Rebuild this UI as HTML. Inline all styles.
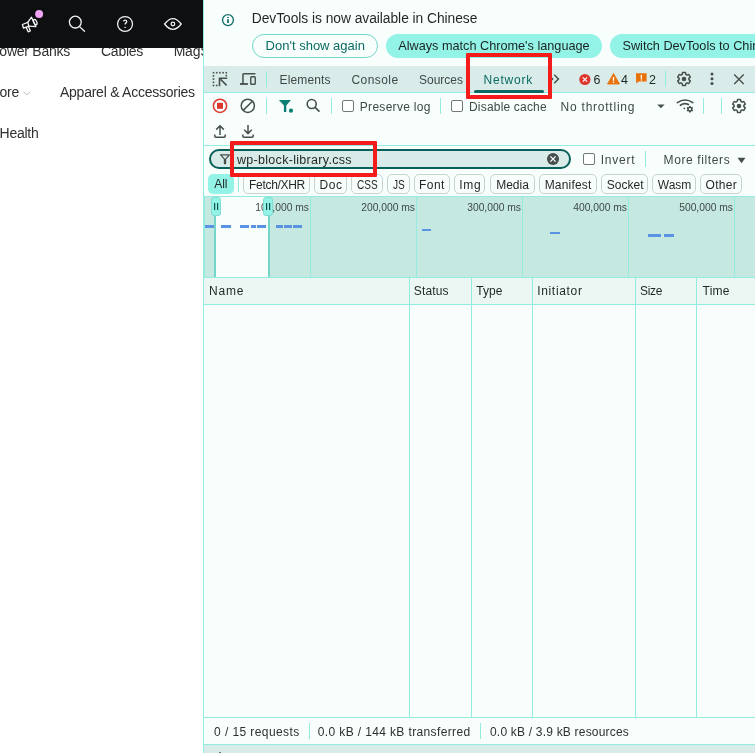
<!DOCTYPE html>
<html><head><meta charset="utf-8">
<style>
*{margin:0;padding:0;box-sizing:border-box}
html,body{width:755px;height:753px;overflow:hidden;background:#fff;font-family:"Liberation Sans",sans-serif}
.a{position:absolute}
.t{position:absolute;white-space:nowrap;line-height:1}
#page{will-change:transform;position:absolute;left:0;top:0;width:203px;height:753px;background:#fff;overflow:hidden}
#bar{position:absolute;left:0;top:0;width:203px;height:48px;background:#0e0f11}
.nav{position:absolute;white-space:nowrap;line-height:1;font-size:14px;letter-spacing:-0.25px;color:#303030}
#dt{will-change:transform;position:absolute;left:203px;top:0;width:552px;height:753px;background:#f8fefc;overflow:hidden;color:#1f1f1f}
.d{position:absolute;white-space:nowrap;line-height:1;font-size:12px;color:#3f4948}
.hl{position:absolute;height:1px;background:#94ece0}
.vl{position:absolute;width:1px;background:#94ece0}
.btn{position:absolute;top:34px;height:24px;border-radius:12px}
.chip{position:absolute;top:174px;height:20px;border:1px solid #c8d3d1;border-radius:5px}
.chip span{position:absolute;top:3.5px;white-space:nowrap;line-height:1;font-size:12px;color:#1f2625}
.cb{position:absolute;width:12px;height:12px;border:1px solid #6f7978;border-radius:2px;background:#fff}
.lab{position:absolute;white-space:nowrap;line-height:1;font-size:10.3px;color:#3f4948;text-align:right}
.dash{position:absolute;height:2.3px;background:#5b93e4}
svg{position:absolute;overflow:visible}
</style></head><body>
<div id="page">
  <div class="nav" style="right:133px;top:43.6px">Power Banks</div>
  <div class="nav" style="left:101px;top:43.6px">Cables</div>
  <div class="nav" style="left:173.7px;top:43.6px">MagSafe</div>
  <div id="bar">
    <svg style="left:0;top:0" width="203" height="48" viewBox="0 0 203 48">
      <g fill="none" stroke="#f2f2f2" stroke-width="1.3" stroke-linejoin="round" stroke-linecap="round">
        <path d="M22.4 24.5 L27.8 22.4 L28.9 26.2 L23.5 28.2 Z"/>
        <path d="M27.8 22.4 L31.5 17.2 L35.9 26.6 L28.9 26.2"/>
        <ellipse cx="35.2" cy="22.1" rx="1.5" ry="2.8" transform="rotate(-25 35.2 22.1)"/>
        <path d="M26.1 27.4 L28.2 31.8 L30.3 30.9 L28.5 26.6"/>
        <circle cx="75.3" cy="22.1" r="5.9"/>
        <path d="M79.6 26.6 L84.5 31.3"/>
        <circle cx="125.05" cy="23.95" r="7.45" stroke-width="1.25"/>
        <path d="M123.5 21.3 Q123.7 20.2 125.1 20.2 Q126.7 20.2 126.7 21.6 Q126.7 22.5 125.8 23.1 Q125.1 23.6 125.1 24.6" stroke-width="1.3" stroke-linecap="butt"/>
        <path d="M164.6 24 Q172.9 13.2 181.2 24 Q172.9 34.8 164.6 24 Z"/>
        <circle cx="172.9" cy="24" r="1.8"/>
      </g>
      <rect x="124.3" y="26.9" width="1.6" height="1" fill="#f2f2f2"/>
      <circle cx="39.1" cy="14" r="4" fill="#f0a5f4"/>
    </svg>
  </div>
  <div class="nav" style="right:184px;top:84.8px">More</div>
  <svg style="left:23px;top:90.5px" width="8" height="5" viewBox="0 0 8 5"><path d="M0.5 0.5 L3.75 4 L7 0.5" fill="none" stroke="#b5b5b5" stroke-width="0.9"/></svg>
  <div class="nav" style="left:60px;top:84.8px">Apparel &amp; Accessories</div>
  <div class="nav" style="right:164.5px;top:126.2px">Health</div>
</div>

<div id="dt">
  <div class="vl" style="left:0;top:0;height:753px"></div>
  <!-- infobar -->
  <svg style="left:17px;top:12px" width="16" height="16" viewBox="0 0 16 16">
    <circle cx="7.96" cy="8.1" r="5.45" fill="none" stroke="#14706a" stroke-width="1.35"/>
    <rect x="7.05" y="7.2" width="1.8" height="3.8" fill="#14706a"/>
    <rect x="7.05" y="4.95" width="1.8" height="1" fill="#14706a"/>
  </svg>
  <div class="d" style="left:48.8px;top:12px;font-size:13.8px;letter-spacing:-0.04px;color:#1f2625">DevTools is now available in Chinese</div>
  <div class="btn" style="left:49px;width:126px;border:1px solid #72d6c8"></div>
  <div class="d" style="left:62.6px;top:38.8px;font-size:13px;color:#0b6b63">Don't show again</div>
  <div class="btn" style="left:183px;width:216px;background:#93f3e6"></div>
  <div class="d" style="left:195.2px;top:39.6px;font-size:12.7px;color:#1b2423">Always match Chrome's language</div>
  <div class="btn" style="left:407px;width:200px;background:#93f3e6"></div>
  <div class="d" style="left:419.5px;top:39.6px;font-size:12.7px;color:#1b2423">Switch DevTools to Chinese</div>

  <!-- toolbar -->
  <div class="a" style="left:1px;top:66px;width:551px;height:26px;background:#d9ece9"></div>
  <div class="hl" style="left:1px;top:92px;width:551px"></div>
  <svg style="left:9px;top:71px" width="16" height="16" viewBox="0 0 16 16">
    <g fill="#474f4e"><rect x="0.7" y="0.9" width="1.6" height="1.6"/><rect x="3.9" y="0.9" width="1.6" height="1.6"/><rect x="7.1" y="0.9" width="1.6" height="1.6"/><rect x="10.3" y="0.9" width="1.6" height="1.6"/><rect x="13.5" y="0.9" width="1.6" height="1.6"/><rect x="13.5" y="3.8" width="1.6" height="1.6"/><rect x="0.7" y="4.1" width="1.6" height="1.6"/><rect x="0.7" y="7.3" width="1.6" height="1.6"/><rect x="0.7" y="10.5" width="1.6" height="1.6"/><rect x="0.7" y="13.7" width="1.6" height="1.6"/><rect x="3.9" y="13.7" width="1.6" height="1.6"/></g>
    <path d="M7.5 15.2 V7.3 H15.2 M7.5 7.3 L14.6 14.4" fill="none" stroke="#474f4e" stroke-width="1.6"/>
  </svg>
  <svg style="left:36px;top:72px" width="18" height="14" viewBox="0 0 18 14">
    <path d="M15.9 1.75 H4.9 Q3.95 1.75 3.95 2.7 V11.5" fill="none" stroke="#474f4e" stroke-width="1.5" stroke-linecap="round"/>
    <rect x="1" y="11.1" width="7.9" height="1.8" fill="#474f4e"/>
    <rect x="11.75" y="4.75" width="4.5" height="7.5" rx="0.8" fill="none" stroke="#474f4e" stroke-width="1.4"/>
  </svg>
  <div class="vl" style="left:63px;top:71px;height:16px"></div>
  <div class="d" style="left:76.5px;top:74.4px;letter-spacing:0.15px">Elements</div>
  <div class="d" style="left:148.5px;top:74.4px;letter-spacing:0.43px">Console</div>
  <div class="d" style="left:216px;top:74.4px">Sources</div>
  <div class="d" style="left:280.50px;top:74.4px;letter-spacing:0.80px;color:#0b6b63">Network</div>
  <div class="a" style="left:271px;top:89.5px;width:70px;height:3px;border-radius:2px;background:#0b6b63"></div>
  <svg style="left:342px;top:73px" width="16" height="12" viewBox="0 0 16 12">
    <path d="M3.5 1.8 L7.6 6 L3.5 10.2 M9.2 1.8 L13.4 6 L9.2 10.2" fill="none" stroke="#474f4e" stroke-width="1.5"/>
  </svg>
  <svg style="left:376px;top:73px" width="12" height="12" viewBox="0 0 12 12">
    <circle cx="5.9" cy="6.5" r="5.6" fill="#dc362e"/>
    <path d="M3.7 4.3 L8.1 8.7 M8.1 4.3 L3.7 8.7" stroke="#fff" stroke-width="1.1"/>
  </svg>
  <div class="d" style="left:390.5px;top:74px;font-size:12.5px;color:#1f2625">6</div>
  <svg style="left:404px;top:73px" width="13" height="12" viewBox="0 0 13 12">
    <path d="M6.5 0.5 L12.5 11 H0.5 Z" fill="#e8710a" stroke="#e8710a" stroke-linejoin="round" stroke-width="0.8"/>
    <rect x="5.8" y="4" width="1.4" height="3.8" fill="#fff"/><rect x="5.8" y="8.6" width="1.4" height="1.3" fill="#fff"/>
  </svg>
  <div class="d" style="left:418px;top:74px;font-size:12.5px;color:#1f2625">4</div>
  <svg style="left:429px;top:73px" width="16" height="12" viewBox="0 0 16 12">
    <path d="M4 0.3 H14.6 V8.6 H6.8 L4.2 10.6 Z" fill="#e8710a"/>
    <rect x="8.7" y="1.9" width="1.3" height="3.8" fill="#fff"/><rect x="8.7" y="6.4" width="1.3" height="1.2" fill="#fff"/>
  </svg>
  <div class="d" style="left:446px;top:74px;font-size:12.5px;color:#1f2625">2</div>
  <div class="vl" style="left:462px;top:71px;height:16px"></div>
  <svg style="left:473px;top:70.6px" width="16" height="16" viewBox="0 0 16 16">
    <path d="M6.16 3.46 L6.52 1.57 L9.48 1.57 L9.84 3.46 L11.02 4.14 L12.83 3.50 L14.31 6.07 L12.85 7.32 L12.85 8.68 L14.31 9.93 L12.83 12.50 L11.02 11.86 L9.84 12.54 L9.48 14.43 L6.52 14.43 L6.16 12.54 L4.98 11.86 L3.17 12.50 L1.69 9.93 L3.15 8.68 L3.15 7.32 L1.69 6.07 L3.17 3.50 L4.98 4.14 Z" fill="none" stroke="#474f4e" stroke-width="1.5" stroke-linejoin="round"/>
    <circle cx="8" cy="8" r="2.3" fill="#474f4e"/>
  </svg>
  <svg style="left:506px;top:72px" width="6" height="14" viewBox="0 0 6 14">
    <circle cx="3" cy="1.9" r="1.5" fill="#474f4e"/><circle cx="3" cy="6.8" r="1.5" fill="#474f4e"/><circle cx="3" cy="11.6" r="1.5" fill="#474f4e"/>
  </svg>
  <svg style="left:530px;top:74px" width="12" height="11" viewBox="0 0 12 11">
    <path d="M1.2 0.6 L10.7 10.1 M10.7 0.6 L1.2 10.1" fill="none" stroke="#474f4e" stroke-width="1.4"/>
  </svg>

  <!-- row 2 -->
  <svg style="left:9px;top:98px" width="16" height="16" viewBox="0 0 16 16">
    <circle cx="8" cy="7.8" r="6.6" fill="none" stroke="#dc362e" stroke-width="1.5"/>
    <rect x="5" y="4.8" width="6" height="6" fill="#dc362e"/>
  </svg>
  <svg style="left:37px;top:98px" width="16" height="16" viewBox="0 0 16 16">
    <circle cx="7.8" cy="7.8" r="6.6" fill="none" stroke="#474f4e" stroke-width="1.5"/>
    <path d="M3.2 12.4 L12.4 3.2" stroke="#474f4e" stroke-width="1.5"/>
  </svg>
  <div class="vl" style="left:63px;top:98px;height:16px"></div>
  <svg style="left:75px;top:99px" width="16" height="14" viewBox="0 0 16 14">
    <path d="M0.9 1 H13 L8.3 6.6 V12.9 H5.9 V6.6 Z" fill="#0b7f74"/>
    <circle cx="13" cy="11.7" r="2.1" fill="#0b7f74"/>
  </svg>
  <svg style="left:102px;top:98.3px" width="16" height="15" viewBox="0 0 16 15">
    <circle cx="6.7" cy="6" r="4.5" fill="none" stroke="#474f4e" stroke-width="1.6"/>
    <path d="M9.8 9.2 L14.5 13.6" stroke="#474f4e" stroke-width="1.7"/>
  </svg>
  <div class="vl" style="left:128px;top:98px;height:16px"></div>
  <div class="cb" style="left:138.7px;top:100.3px"></div>
  <div class="d" style="left:156.80px;top:100.6px;letter-spacing:0.29px">Preserve log</div>
  <div class="vl" style="left:237px;top:98px;height:16px"></div>
  <div class="cb" style="left:247.9px;top:100.3px"></div>
  <div class="d" style="left:266.00px;top:100.6px;letter-spacing:0.19px">Disable cache</div>
  <div class="d" style="left:357.60px;top:100.6px;letter-spacing:0.76px">No throttling</div>
  <svg style="left:454px;top:104px" width="8" height="5" viewBox="0 0 8 5"><path d="M0.2 0.4 H7.6 L3.9 4.2 Z" fill="#474f4e"/></svg>
  <svg style="left:473px;top:97px" width="20" height="16" viewBox="0 0 20 16">
    <path d="M1.4 5.6 Q9.1 0.4 16.8 5.6" fill="none" stroke="#474f4e" stroke-width="1.7" stroke-linecap="round"/>
    <path d="M4.4 8.3 Q8.4 5.4 12.4 7.6" fill="none" stroke="#474f4e" stroke-width="1.7" stroke-linecap="round"/>
    <path d="M9 10.2 L7 11.4 L9 12.6 Z" fill="#474f4e"/>
    <path d="M12.88 9.92 L13.08 8.90 L14.72 8.90 L14.92 9.92 L15.37 10.18 L16.35 9.84 L17.17 11.26 L16.39 11.94 L16.39 12.46 L17.17 13.14 L16.35 14.56 L15.37 14.22 L14.92 14.48 L14.72 15.50 L13.08 15.50 L12.88 14.48 L12.43 14.22 L11.45 14.56 L10.63 13.14 L11.41 12.46 L11.41 11.94 L10.63 11.26 L11.45 9.84 L12.43 10.18 Z M15.00 12.2 A1.1 1.1 0 1 0 12.80 12.2 A1.1 1.1 0 1 0 15.00 12.2 Z" fill="#474f4e" fill-rule="evenodd"/>
  </svg>
  <div class="vl" style="left:500px;top:98px;height:16px"></div>
  <div class="vl" style="left:518px;top:98px;height:16px"></div>
  <svg style="left:528px;top:97.9px" width="16" height="16" viewBox="0 0 16 16">
    <path d="M6.16 3.46 L6.52 1.57 L9.48 1.57 L9.84 3.46 L11.02 4.14 L12.83 3.50 L14.31 6.07 L12.85 7.32 L12.85 8.68 L14.31 9.93 L12.83 12.50 L11.02 11.86 L9.84 12.54 L9.48 14.43 L6.52 14.43 L6.16 12.54 L4.98 11.86 L3.17 12.50 L1.69 9.93 L3.15 8.68 L3.15 7.32 L1.69 6.07 L3.17 3.50 L4.98 4.14 Z" fill="none" stroke="#474f4e" stroke-width="1.5" stroke-linejoin="round"/>
    <circle cx="8" cy="8" r="2.3" fill="#474f4e"/>
  </svg>

  <!-- row 3 -->
  <svg style="left:10px;top:124px" width="14" height="15" viewBox="0 0 14 15">
    <path d="M7 11 V2 M3.2 5.6 L7 1.8 L10.8 5.6" fill="none" stroke="#474f4e" stroke-width="1.5"/>
    <path d="M1.8 10.6 V12 Q1.8 13.2 3 13.2 H11 Q12.2 13.2 12.2 12 V10.6" fill="none" stroke="#474f4e" stroke-width="1.5"/>
  </svg>
  <svg style="left:38px;top:124px" width="14" height="15" viewBox="0 0 14 15">
    <path d="M7 1 V9.5 M3.2 5.8 L7 9.6 L10.8 5.8" fill="none" stroke="#474f4e" stroke-width="1.5"/>
    <path d="M1.8 10.6 V12 Q1.8 13.2 3 13.2 H11 Q12.2 13.2 12.2 12 V10.6" fill="none" stroke="#474f4e" stroke-width="1.5"/>
  </svg>
  <div class="hl" style="left:1px;top:145px;width:551px"></div>

  <!-- filter input -->
  <div class="a" style="left:6px;top:149px;width:362px;height:20px;border:2px solid #08605a;border-radius:10px;background:#d9ebe8"></div>
  <svg style="left:17px;top:154px" width="10" height="10" viewBox="0 0 10 10">
    <path d="M0.6 0.8 H9.4 L5.6 5.2 V9.6 H4.4 V5.2 Z" fill="none" stroke="#474f4e" stroke-width="1.2" stroke-linejoin="round"/>
  </svg>
  <div class="d" style="left:34px;top:154px;font-size:12.5px;letter-spacing:0.3px;color:#1f2625">wp-block-library.css</div>
  <svg style="left:344px;top:153px" width="12" height="12" viewBox="0 0 12 12">
    <circle cx="6" cy="6" r="6" fill="#474f4e"/>
    <path d="M3.4 3.4 L8.6 8.6 M8.6 3.4 L3.4 8.6" stroke="#fff" stroke-width="1.3"/>
  </svg>
  <div class="cb" style="left:380px;top:153px"></div>
  <div class="d" style="left:397.8px;top:154px;letter-spacing:0.74px">Invert</div>
  <div class="vl" style="left:442px;top:151px;height:16px"></div>
  <div class="d" style="left:460.60px;top:154px;letter-spacing:0.61px">More filters</div>
  <svg style="left:533.5px;top:157px" width="9" height="7" viewBox="0 0 9 7"><path d="M0.5 0.8 H8.5 L4.5 6.2 Z" fill="#474f4e"/></svg>

  <!-- chips -->
  <div class="a" style="left:5px;top:174px;width:26px;height:20px;border-radius:5px;background:#93f3e6"></div>
  <div class="d" style="left:11.2px;top:177.6px;color:#1f2625">All</div>
  <div class="vl" style="left:35px;top:177px;height:15px"></div>
  <div class="chip" style="left:40px;width:67px"><span style="left:5.00px;letter-spacing:-0.3px">Fetch/XHR</span></div>
  <div class="chip" style="left:111px;width:33px"><span style="left:4.4px;letter-spacing:0.6px">Doc</span></div>
  <div class="chip" style="left:148px;width:32px"><span style="left:4.6px;transform:scaleX(0.84);transform-origin:0 0">CSS</span></div>
  <div class="chip" style="left:184px;width:23px"><span style="left:5.2px;transform:scaleX(0.84);transform-origin:0 0">JS</span></div>
  <div class="chip" style="left:211px;width:36px"><span style="left:4.1px;letter-spacing:0.4px">Font</span></div>
  <div class="chip" style="left:251px;width:31px"><span style="left:4.3px;letter-spacing:0.7px">Img</span></div>
  <div class="chip" style="left:287px;width:45px"><span style="left:5.20px">Media</span></div>
  <div class="chip" style="left:336px;width:58px"><span style="left:4.7px;letter-spacing:0.17px">Manifest</span></div>
  <div class="chip" style="left:398px;width:47px"><span style="left:4.80px">Socket</span></div>
  <div class="chip" style="left:449px;width:44px"><span style="left:4.80px">Wasm</span></div>
  <div class="chip" style="left:497px;width:42px"><span style="left:4.5px;letter-spacing:0.3px">Other</span></div>

  <!-- overview -->
  <div class="hl" style="left:1px;top:196px;width:551px"></div>
  <div class="a" style="left:1px;top:197px;width:551px;height:80px;background:#c5e8e1"></div>
  <div class="a" style="left:13px;top:197px;width:53px;height:80px;background:#f8fefc"></div>
  <div class="vl" style="left:107px;top:197px;height:80px"></div>
  <div class="vl" style="left:213px;top:197px;height:80px"></div>
  <div class="vl" style="left:319px;top:197px;height:80px"></div>
  <div class="vl" style="left:425px;top:197px;height:80px"></div>
  <div class="vl" style="left:531px;top:197px;height:80px"></div>
  <div class="lab" style="right:446px;top:203px">100,000 ms</div>
  <div class="lab" style="right:340px;top:203px">200,000 ms</div>
  <div class="lab" style="right:234px;top:203px">300,000 ms</div>
  <div class="lab" style="right:128px;top:203px">400,000 ms</div>
  <div class="lab" style="right:22px;top:203px">500,000 ms</div>
    <div class="dash" style="left:1.7px;width:9.4px;top:225.4px"></div>
  <div class="dash" style="left:17.9px;width:10.1px;top:225.4px"></div>
  <div class="dash" style="left:36.8px;width:9.5px;top:225.4px"></div>
  <div class="dash" style="left:47.6px;width:5.4px;top:225.4px"></div>
  <div class="dash" style="left:53.7px;width:9.5px;top:225.4px"></div>
  <div class="dash" style="left:72.6px;width:7.4px;top:225.4px"></div>
  <div class="dash" style="left:80.7px;width:8.1px;top:225.4px"></div>
  <div class="dash" style="left:89.8px;width:9.2px;top:225.4px"></div>
  <div class="dash" style="left:218.9px;width:9.0px;top:228.6px"></div>
  <div class="dash" style="left:346.9px;width:10.0px;top:232px"></div>
  <div class="dash" style="left:445.4px;width:12.9px;top:234.4px"></div>
  <div class="dash" style="left:461.3px;width:9.9px;top:234.4px"></div>
  <div class="a" style="left:11px;top:197px;width:2px;height:80px;background:#73d6c9"></div>
  <div class="a" style="left:65px;top:197px;width:2px;height:80px;background:#73d6c9"></div>
  <div class="a" style="left:8px;top:197px;width:10px;height:19px;border-radius:3px;background:#93f3e6;border:1px solid #7fdcd0"></div>
  <div class="a" style="left:60px;top:197px;width:10px;height:19px;border-radius:3px;background:#93f3e6;border:1px solid #7fdcd0"></div>
  <svg style="left:8px;top:197px" width="10" height="19" viewBox="0 0 10 19"><path d="M3.6 6 V13 M6.6 6 V13" stroke="#08514b" stroke-width="1.2"/></svg>
  <svg style="left:60px;top:197px" width="10" height="19" viewBox="0 0 10 19"><path d="M3.6 6 V13 M6.6 6 V13" stroke="#08514b" stroke-width="1.2"/></svg>

  <div class="vl" style="left:1px;top:197px;height:107px"></div>
  <!-- header -->
  <div class="hl" style="left:1px;top:277px;width:551px"></div>
  <div class="a" style="left:1px;top:278px;width:551px;height:26px;background:#ecf7f3"></div>
  <div class="hl" style="left:1px;top:304px;width:551px"></div>
  <div class="vl" style="left:206px;top:278px;height:439px"></div>
  <div class="vl" style="left:268px;top:278px;height:439px"></div>
  <div class="vl" style="left:329px;top:278px;height:439px"></div>
  <div class="vl" style="left:432px;top:278px;height:439px"></div>
  <div class="vl" style="left:493px;top:278px;height:439px"></div>
  <div class="d" style="left:6.00px;top:284.7px;color:#1f2625;letter-spacing:0.80px">Name</div>
  <div class="d" style="left:210.80px;top:284.7px;color:#1f2625;letter-spacing:0.16px">Status</div>
  <div class="d" style="left:273.3px;top:284.7px;color:#1f2625">Type</div>
  <div class="d" style="left:334.20px;top:284.7px;color:#1f2625;letter-spacing:0.67px">Initiator</div>
  <div class="d" style="left:437px;top:284.7px;color:#1f2625;letter-spacing:-0.33px">Size</div>
  <div class="d" style="left:499.60px;top:284.7px;color:#1f2625;letter-spacing:0.23px">Time</div>

  <!-- status bar -->
  <div class="hl" style="left:1px;top:717px;width:551px"></div>
  <div class="d" style="left:11.1px;top:725.9px;letter-spacing:0.41px;color:#2c3231">0 / 15 requests</div>
  <div class="vl" style="left:106px;top:723px;height:16px"></div>
  <div class="d" style="left:114.80px;top:725.9px;letter-spacing:0.37px;color:#2c3231">0.0 kB / 144 kB transferred</div>
  <div class="vl" style="left:277px;top:723px;height:16px"></div>
  <div class="d" style="left:287px;top:725.9px;letter-spacing:0.20px;color:#2c3231">0.0 kB / 3.9 kB resources</div>
  <div class="hl" style="left:1px;top:744px;width:551px"></div>
  <div class="a" style="left:1px;top:745px;width:551px;height:8px;background:#d9ece9"></div>
  <div class="a" style="left:15.8px;top:751.6px;width:2.4px;height:2.4px;border-radius:50%;background:#474f4e"></div>
</div>

<!-- red annotation boxes -->
<div class="a" style="left:466px;top:53px;width:86px;height:46px;border:4px solid #f41b1b;border-radius:1px"></div>
<div class="a" style="left:230px;top:141px;width:147px;height:36px;border:4px solid #f41b1b;border-radius:1px"></div>
</body></html>
